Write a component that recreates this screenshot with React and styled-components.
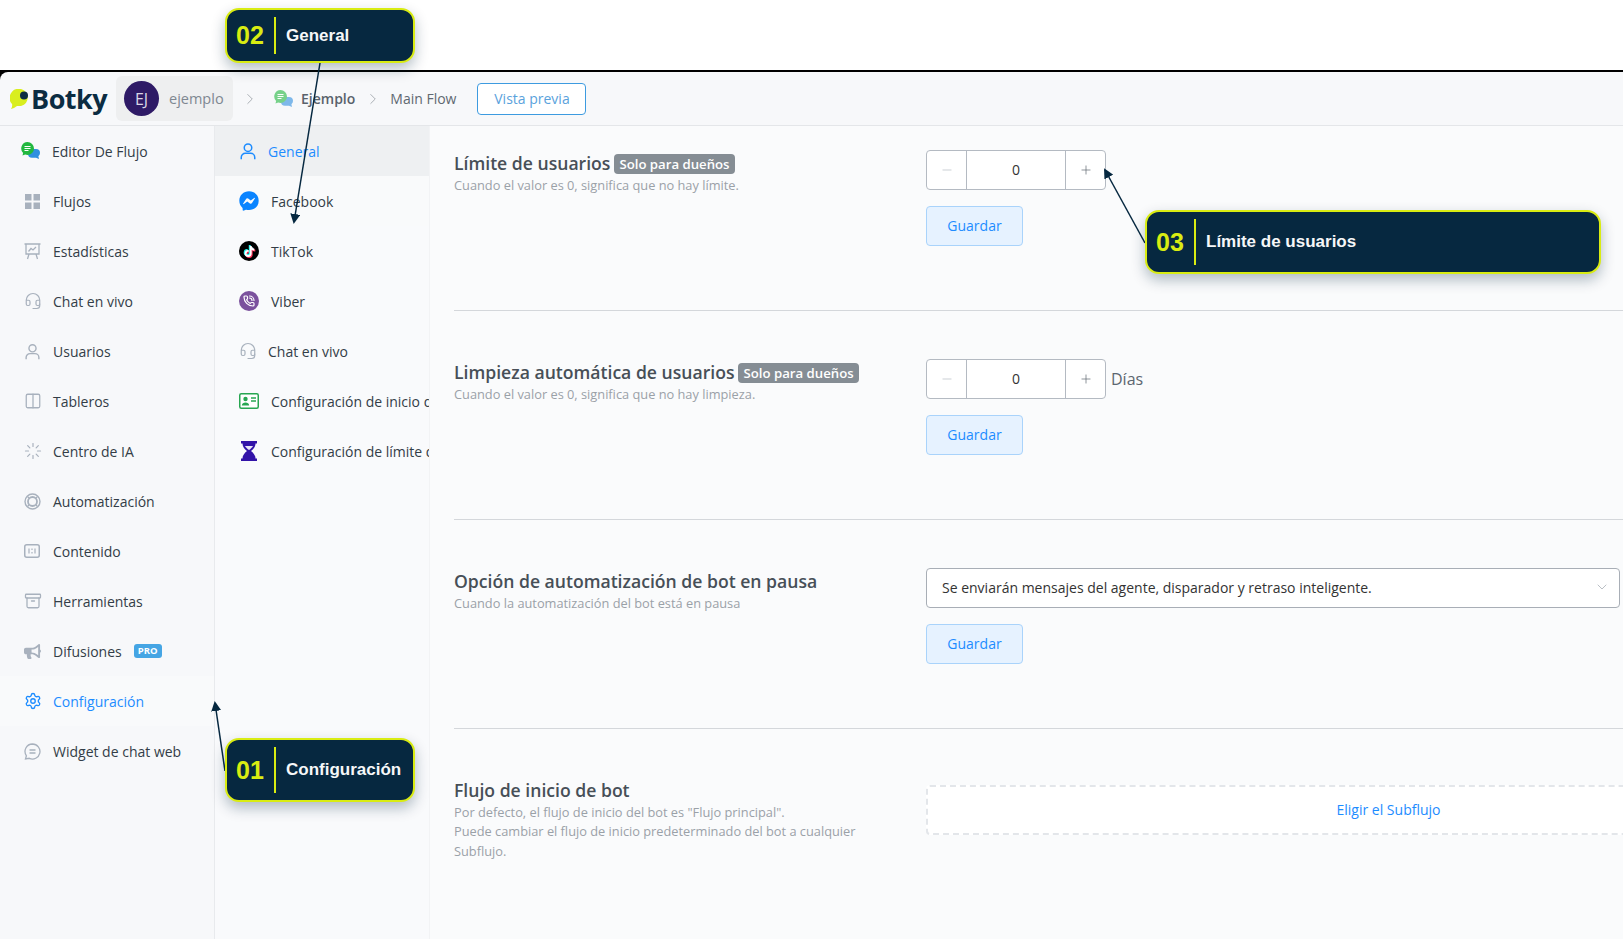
import styled, { createGlobalStyle } from "styled-components";
import { Columns2, Loader, Archive, Settings, Headset, Minus, Plus, ChevronRight, ChevronDown, PhoneCall } from "lucide-react";
import { FaBullhorn, FaFacebookMessenger, FaTiktok } from "react-icons/fa";

const GlobalStyle = createGlobalStyle`
    html, body {
        margin: 0;
        height: 939px;
        overflow: hidden;
        background: #fff;
    }
    * {
        box-sizing: border-box;
    }
    body {
        font-family: "Open Sans", "Noto Sans", sans-serif;
    }
`;

const Page = styled.div`
    position: relative;
    width: 1623px;
    height: 939px;
    padding-top: 70px;
    overflow: hidden;
`;

const Frame = styled.div`
    height: 869px;
    border-top: 2px solid #000;
    display: flex;
    flex-direction: column;
    background: #000;
    overflow: hidden;
`;

const Header = styled.header`
    height: 54px;
    flex-shrink: 0;
    display: flex;
    align-items: center;
    padding-left: 10px;
    background: #f7f8fa;
    border-top-left-radius: 8px;
    border-bottom: 1px solid #e4e6e9;
`;

const Logo = styled.div`
    display: flex;
    align-items: center;
    width: 106px;
    font-size: 27px;
    line-height: 34px;
    font-weight: 700;
    letter-spacing: -0.5px;
    color: #0b2c42;
`;

const Tenant = styled.div`
    width: 117px;
    height: 45px;
    display: flex;
    align-items: center;
    gap: 10px;
    padding-left: 8px;
    border-radius: 6px;
    background: #eeeff0;
    font-size: 14.5px;
    color: #7f8892;
`;

const Avatar = styled.div`
    width: 35px;
    height: 35px;
    border-radius: 50%;
    background: #2e1a66;
    color: #d9d6e6;
    font-size: 16px;
    display: flex;
    align-items: center;
    justify-content: center;
`;

const Crumbs = styled.div`
    display: flex;
    align-items: center;
    font-size: 14px;
    color: #5f6871;
    margin-left: 8px;
`;

const Sep = styled(ChevronRight)`
    color: #a3a8ae;
    margin: ${(p) => p.$margin};
`;

const CrumbName = styled.span`
    font-weight: 600;
    margin-left: 8px;
    color: #59626b;
`;

const PreviewButton = styled.button`
    margin-left: 21px;
    width: 109px;
    height: 32px;
    border: 1px solid #3d9be0;
    border-radius: 4px;
    background: #fff;
    color: #5aa2dc;
    font-family: inherit;
    font-size: 14px;
    padding: 0;
`;

const Body = styled.div`
    flex: 1;
    display: flex;
    min-height: 0;
`;

const Sidebar = styled.nav`
    width: 215px;
    flex-shrink: 0;
    border-right: 1px solid #e8eaed;
    background: #f7f8fa;
`;

const SubNav = styled.nav`
    width: 215px;
    flex-shrink: 0;
    overflow: hidden;
    border-right: 1px solid #f2f3f5;
    background: #f9fafc;
`;

const NavRow = styled.div`
    height: 50px;
    display: flex;
    align-items: center;
    padding-left: ${(p) => p.$inset}px;
    font-size: 14px;
    white-space: nowrap;
    color: ${(p) => (p.$current ? "#1d8cff" : "#333d47")};
    background: ${(p) => (p.$tone === "active" ? "#eef0f2" : p.$tone === "soft" ? "#f9fafb" : "transparent")};
`;

const IconSlot = styled.span`
    width: ${(p) => p.$width}px;
    flex-shrink: 0;
    display: flex;
    align-items: center;
    color: ${(p) => p.$color || "#a8b1bd"};
`;

const LeadIcon = styled.span`
    display: flex;
    margin-left: -3px;
`;

const ProTag = styled.span`
    margin-left: 12px;
    padding: 0 4px;
    height: 14px;
    border-radius: 3px;
    background: #45a5e4;
    color: #fff;
    font-size: 9.5px;
    font-weight: 700;
    line-height: 14px;
`;

const Content = styled.main`
    flex: 1;
    min-width: 0;
    overflow: hidden;
    padding: 24px 0 0 24px;
    background: #fafbfc;
`;

const Section = styled.section`
    height: 161px;
    display: flex;
    border-bottom: ${(p) => (p.$last ? "none" : "1px solid #d4d7db")};
    margin-bottom: 48px;
`;

const Label = styled.div`
    width: 472px;
    flex-shrink: 0;
    padding-right: 57px;
`;

const Title = styled.h3`
    margin: 1px 0 1px;
    font-size: 17.6px;
    line-height: 24px;
    font-weight: 600;
    color: #474f57;
`;

const OwnerBadge = styled.span`
    display: inline-block;
    margin-left: 4px;
    padding: 0 5px;
    height: 20px;
    border-radius: 4px;
    background: #858d94;
    color: #fff;
    font-size: 13.2px;
    line-height: 20px;
    font-weight: 600;
    vertical-align: 1px;
`;

const Hint = styled.p`
    margin: 0;
    font-size: 12.8px;
    line-height: 19.4px;
    color: #9aa1a8;
`;

const Controls = styled.div`
    flex: 1;
    min-width: 0;
    display: flex;
    flex-direction: column;
    align-items: flex-start;
    gap: 16px;
`;

const StepperRow = styled.div`
    display: flex;
    align-items: center;
    gap: 5px;
    font-size: 16px;
    line-height: 20px;
    color: #5c6670;
`;

const Stepper = styled.div`
    width: 180px;
    height: 40px;
    display: flex;
    background: #fff;
    border: 1px solid #b4bac2;
    border-radius: 4px;
`;

const StepButton = styled.div`
    width: 39px;
    flex-shrink: 0;
    display: flex;
    align-items: center;
    justify-content: center;
    color: ${(p) => p.$color};
`;

const StepValue = styled.div`
    flex: 1;
    display: flex;
    align-items: center;
    justify-content: center;
    border-left: 1px solid #b4bac2;
    border-right: 1px solid #b4bac2;
    font-size: 14px;
    color: #333;
`;

const SaveButton = styled.button`
    width: 97px;
    height: 40px;
    padding: 0 0 2px;
    border: 1px solid #a9d3fb;
    border-radius: 4px;
    background: #e6f2ff;
    color: #1d8cff;
    font-family: inherit;
    font-size: 14px;
`;

const Select = styled.div`
    width: 694px;
    height: 40px;
    display: flex;
    align-items: center;
    justify-content: space-between;
    padding: 0 9px 2px 15px;
    background: #fff;
    border: 1px solid #a8aeb6;
    border-radius: 4px;
    font-size: 14px;
    color: #333;
`;

const PickBox = styled.div`
    width: 925px;
    height: 50px;
    margin-top: 8px;
    display: flex;
    align-items: center;
    justify-content: center;
    padding-bottom: 2px;
    background: #fff;
    border: 2px dashed #e3e6ea;
    border-radius: 4px;
    font-size: 14px;
    color: #1d8cff;
`;

const Callout = styled.div`
    position: absolute;
    left: ${(p) => p.$left}px;
    top: ${(p) => p.$top}px;
    width: ${(p) => p.$width}px;
    height: ${(p) => p.$height}px;
    display: flex;
    align-items: center;
    padding: 0 0 0 9px;
    background: #062840;
    border: 2px solid #d9ec12;
    border-radius: 14px;
    box-shadow: 0 6px 14px rgba(6, 40, 64, 0.3);
    font-family: "Liberation Sans", Arial, sans-serif;
    font-weight: 700;
`;

const CalloutNum = styled.span`
    width: 38px;
    font-size: 25px;
    color: #d9ec12;
`;

const CalloutText = styled.span`
    height: 100%;
    padding-left: 10px;
    display: flex;
    align-items: center;
    font-size: 17px;
    color: #f5f7f8;
`;

const CalloutRule = styled.span`
    width: 2px;
    height: calc(100% - 14px);
    background: #d9ec12;
`;

const ArrowLayer = styled.svg`
    position: absolute;
    inset: 0;
    pointer-events: none;
`;

const RoundBadge = styled.span`
    width: 20px;
    height: 20px;
    border-radius: 50%;
    display: flex;
    align-items: center;
    justify-content: center;
    color: #fff;
    background: ${(p) => p.$bg};
`;

const TiktokGlyph = styled(FaTiktok)`
    filter: drop-shadow(-1px -1px 0 #25f4ee) drop-shadow(1px 1px 0 #fe2c55);
`;

const BotChat = ({ muted }) => (
    <svg width="19" height="18" viewBox="0 0 19 18" opacity={muted ? 0.6 : 1}>
        <path d="M9 7h6a4 4 0 0 1 4 4 4 4 0 0 1-1.600 3.200L18 17l-3-1.200H11a4 4 0 0 1-4-4V9z" fill="#2f8fe0" />
        <path d="M6.500 0a6.500 6.500 0 0 1 0 13c-.8 0-1.600-.1-2.300-.4L1.500 13.500l.6-2.500A6.500 6.500 0 0 1 6.500 0z" fill="#22b83f" />
        <path d="M3.500 4.500h6M3.500 6.500h6M3.500 8.500h4" stroke="#fff" strokeWidth="1" />
    </svg>
);

const PersonIcon = ({ size = 18 }) => (
    <svg width={size} height={size} viewBox="0 0 24 24" fill="none" stroke="currentColor" strokeWidth="2">
        <circle cx="12" cy="7.500" r="5" />
        <path d="M3 23v-2.500a5.500 5.500 0 0 1 5.500-5.500h7a5.500 5.500 0 0 1 5.500 5.500V23" />
    </svg>
);

const GridIcon = () => (
    <svg width="15" height="15" viewBox="0 0 15 15" fill="currentColor" style={{ marginLeft: 1 }}>
        <rect width="6.500" height="6.500" />
        <rect x="8.500" width="6.500" height="6.500" />
        <rect y="8.500" width="6.500" height="6.500" />
        <rect x="8.500" y="8.500" width="6.500" height="6.500" />
    </svg>
);

const BoardIcon = () => (
    <svg width="17" height="17" viewBox="0 0 17 17" fill="none" stroke="currentColor" strokeWidth="1.300">
        <path d="M0.500 1h16M2 1v10h13V1M5 11l-1.500 5M12 11l1.500 5M4.500 8.500l2.500-3 2 1.500 3-3" />
    </svg>
);

const RingsIcon = () => (
    <svg width="17" height="17" viewBox="0 0 17 17" fill="none" stroke="currentColor">
        <circle cx="8.500" cy="8.500" r="7.500" strokeWidth="1.400" />
        <circle cx="8.500" cy="8.500" r="4.500" strokeWidth="1.800" />
        <path d="M3.500 3.500l1.500 1.500M13.500 3.500L12 5M3.500 13.500L5 12M13.500 13.500L12 12" strokeWidth="1.200" />
    </svg>
);

const ContentIcon = () => (
    <svg width="16" height="14" viewBox="0 0 16 14" fill="none" stroke="currentColor">
        <rect x="0.750" y="0.750" width="14.500" height="12.500" rx="2" strokeWidth="1.500" />
        <path d="M5 4.500v5M8 4.500v1.500M8 8v1.500M11 4.500v5" strokeWidth="1.200" />
    </svg>
);

const WidgetIcon = () => (
    <svg width="17" height="17" viewBox="0 0 17 17" fill="none" stroke="currentColor" strokeWidth="1.300">
        <path d="M8.500 1a7.500 7.500 0 1 1-3.200 14.300L1.500 16l.9-3.200A7.500 7.500 0 0 1 8.500 1z" />
        <path d="M5.500 7h6M5.500 10h6" />
    </svg>
);

const CardIcon = () => (
    <svg width="20" height="16" viewBox="0 0 20 16">
        <rect x="0.750" y="0.750" width="18.500" height="14.500" rx="1.500" fill="#fff" stroke="#27a651" strokeWidth="1.500" />
        <circle cx="6.500" cy="6" r="2.200" fill="#27a651" />
        <path d="M2.800 12.500c0-4 7.400-4 7.400 0z" fill="#27a651" />
        <path d="M12 5h5M12 8h5" stroke="#27a651" strokeWidth="1.300" />
    </svg>
);

const HourglassIcon = () => (
    <svg width="16" height="20" viewBox="0 0 16 20" fill="#3213a8" style={{ marginLeft: 2 }}>
        <path d="M0 0h16v2.500h-1.500c0 3-2 5.500-4.500 7.500 2.500 2 4.500 4.500 4.500 7.500H16V20H0v-2.500h1.500C1.500 14.500 3.500 12 6 10 3.500 8 1.500 5.500 1.500 2.500H0z" />
        <path d="M4 5h8c-.6 1.300-2.400 3-4 4-1.600-1-3.400-2.700-4-4z" fill="#e9e6f7" />
    </svg>
);

const LogoMark = () => (
    <svg width="21" height="20" viewBox="0 0 21 20" style={{ flexShrink: 0 }}>
        <path d="M10 0h1a10 9 0 0 1 0 17H7c-2 1.500-4 2.500-6 3 1-1.500 1.500-3.500 1-5A9 9 0 0 1 10 0z" fill="#d9ee1f" />
        <circle cx="14" cy="6.500" r="4" fill="#0b2c42" />
    </svg>
);

const mainNav = [
    { label: "Editor De Flujo", icon: <LeadIcon><BotChat /></LeadIcon>, slot: 28 },
    { label: "Flujos", icon: <GridIcon /> },
    { label: "Estadísticas", icon: <BoardIcon /> },
    { label: "Chat en vivo", icon: <Headset size={18} strokeWidth={1.6} /> },
    { label: "Usuarios", icon: <PersonIcon size={17} /> },
    { label: "Tableros", icon: <Columns2 size={18} strokeWidth={1.7} /> },
    { label: "Centro de IA", icon: <Loader size={18} strokeWidth={1.6} /> },
    { label: "Automatización", icon: <RingsIcon /> },
    { label: "Contenido", icon: <ContentIcon /> },
    { label: "Herramientas", icon: <Archive size={18} strokeWidth={1.7} /> },
    { label: "Difusiones", icon: <FaBullhorn size={17} />, pro: true },
    { label: "Configuración", icon: <Settings size={18} strokeWidth={1.8} color="#1d8cff" />, current: true, tone: "soft" },
    { label: "Widget de chat web", icon: <WidgetIcon /> },
];

const subNav = [
    { label: "General", icon: <PersonIcon size={18} />, slot: 29, current: true, tone: "active", color: "#1d8cff" },
    { label: "Facebook", icon: <FaFacebookMessenger size={20} color="#0a84ff" />, tone: "soft" },
    { label: "TikTok", icon: <RoundBadge $bg="#000"><TiktokGlyph size={11} /></RoundBadge> },
    { label: "Viber", icon: <RoundBadge $bg="#7b519d"><PhoneCall size={12} strokeWidth={2.4} /></RoundBadge> },
    { label: "Chat en vivo", icon: <Headset size={18} strokeWidth={1.6} />, slot: 29 },
    { label: "Configuración de inicio de bot", icon: <CardIcon /> },
    { label: "Configuración de límite de uso", icon: <HourglassIcon /> },
];

const OWNER = "Solo para dueños";

function CounterField({ unit }) {
    return (
        <StepperRow>
            <Stepper>
                <StepButton $color="#b6bcc3"><Minus size={14} strokeWidth={1.2} /></StepButton>
                <StepValue>0</StepValue>
                <StepButton $color="#5f6871"><Plus size={14} strokeWidth={1.2} /></StepButton>
            </Stepper>
            {unit}
        </StepperRow>
    );
}

export default function App() {
    return (
        <Page>
            <GlobalStyle />
            <Frame>
                <Header>
                    <Logo><LogoMark />Botky</Logo>
                    <Tenant>
                        <Avatar>EJ</Avatar>
                        ejemplo
                    </Tenant>
                    <Crumbs>
                        <Sep size={18} strokeWidth={1.2} $margin="0 15px 0 0" />
                        <BotChat muted />
                        <CrumbName>Ejemplo</CrumbName>
                        <Sep size={18} strokeWidth={1.2} $margin="0 8px 0 9px" />
                        Main Flow
                    </Crumbs>
                    <PreviewButton>Vista previa</PreviewButton>
                </Header>
                <Body>
                    <Sidebar>
                        {mainNav.map((item) => (
                            <NavRow key={item.label} $inset={24} $current={item.current} $tone={item.tone}>
                                <IconSlot $width={item.slot || 29}>{item.icon}</IconSlot>
                                {item.label}
                                {item.pro && <ProTag>PRO</ProTag>}
                            </NavRow>
                        ))}
                    </Sidebar>
                    <SubNav>
                        {subNav.map((item) => (
                            <NavRow key={item.label} $inset={24} $current={item.current} $tone={item.tone}>
                                <IconSlot $width={item.slot || 32} $color={item.color}>{item.icon}</IconSlot>
                                {item.label}
                            </NavRow>
                        ))}
                    </SubNav>
                    <Content>
                        <Section>
                            <Label>
                                <Title>Límite de usuarios<OwnerBadge>{OWNER}</OwnerBadge></Title>
                                <Hint>Cuando el valor es 0, significa que no hay límite.</Hint>
                            </Label>
                            <Controls>
                                <CounterField />
                                <SaveButton>Guardar</SaveButton>
                            </Controls>
                        </Section>
                        <Section>
                            <Label>
                                <Title>Limpieza automática de usuarios<OwnerBadge>{OWNER}</OwnerBadge></Title>
                                <Hint>Cuando el valor es 0, significa que no hay limpieza.</Hint>
                            </Label>
                            <Controls>
                                <CounterField unit="Días" />
                                <SaveButton>Guardar</SaveButton>
                            </Controls>
                        </Section>
                        <Section>
                            <Label>
                                <Title>Opción de automatización de bot en pausa</Title>
                                <Hint>Cuando la automatización del bot está en pausa</Hint>
                            </Label>
                            <Controls>
                                <Select>
                                    Se enviarán mensajes del agente, disparador y retraso inteligente.
                                    <ChevronDown size={16} strokeWidth={1.2} color="#a8aeb6" />
                                </Select>
                                <SaveButton>Guardar</SaveButton>
                            </Controls>
                        </Section>
                        <Section $last>
                            <Label>
                                <Title>Flujo de inicio de bot</Title>
                                <Hint>Por defecto, el flujo de inicio del bot es "Flujo principal".</Hint>
                                <Hint>Puede cambiar el flujo de inicio predeterminado del bot a cualquier Subflujo.</Hint>
                            </Label>
                            <Controls>
                                <PickBox>Eligir el Subflujo</PickBox>
                            </Controls>
                        </Section>
                    </Content>
                </Body>
            </Frame>

            <ArrowLayer width="1623" height="939">
                <defs>
                    <marker id="head" markerWidth="10" markerHeight="10" refX="8" refY="5" orient="auto" markerUnits="userSpaceOnUse">
                        <path d="M0 0L10 5L0 10z" fill="#062840" />
                    </marker>
                </defs>
                <g stroke="#062840" strokeWidth="1.500" fill="none">
                    <line x1="320" y1="63" x2="294" y2="222" markerEnd="url(#head)" />
                    <line x1="225" y1="771" x2="215" y2="703" markerEnd="url(#head)" />
                    <line x1="1145" y1="243" x2="1105" y2="170" markerEnd="url(#head)" />
                </g>
            </ArrowLayer>

            <Callout $left={225} $top={8} $width={190} $height={55}>
                <CalloutNum>02</CalloutNum>
                <CalloutRule />
                <CalloutText>General</CalloutText>
            </Callout>
            <Callout $left={225} $top={738} $width={190} $height={64}>
                <CalloutNum>01</CalloutNum>
                <CalloutRule />
                <CalloutText>Configuración</CalloutText>
            </Callout>
            <Callout $left={1145} $top={210} $width={456} $height={64}>
                <CalloutNum>03</CalloutNum>
                <CalloutRule />
                <CalloutText>Límite de usuarios</CalloutText>
            </Callout>
        </Page>
    );
}
